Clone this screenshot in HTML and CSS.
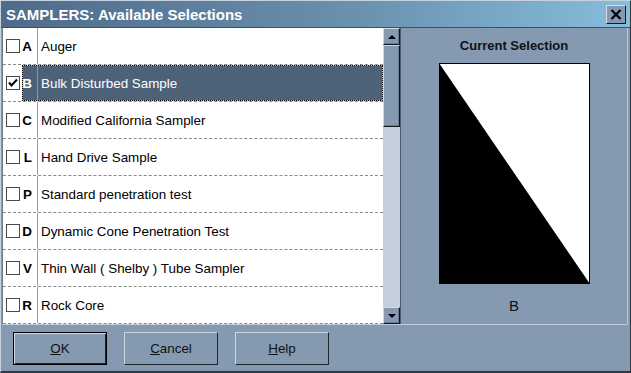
FILE: index.html
```html
<!DOCTYPE html>
<html>
<head>
<meta charset="utf-8">
<link rel="stylesheet" href="styles.css">
</head>
<body>
<div class="win">
  <div class="titlebar">
    <span class="title">SAMPLERS: Available Selections</span>
    <div class="close"><svg width="12" height="11" viewBox="0 0 12 11"><path d="M1.5 1 L10.5 10 M10.5 1 L1.5 10" stroke="#000" stroke-width="2.2" fill="none"/></svg></div>
  </div>
  <div class="main">
    <div class="list">
      <div class="row"><div class="cbcell"><span class="cb"></span></div><div class="item"><span class="key">A</span><span class="label">Auger</span></div></div>
      <div class="row"><div class="cbcell"><span class="cb"><svg width="12" height="12" viewBox="0 0 12 12"><path d="M2 5.5 L4.5 8.5 L10 2.5" stroke="#000" stroke-width="2" fill="none"/></svg></span></div><div class="item sel"><span class="key">B</span><span class="label">Bulk Disturbed Sample</span></div></div>
      <div class="row"><div class="cbcell"><span class="cb"></span></div><div class="item"><span class="key">C</span><span class="label">Modified California Sampler</span></div></div>
      <div class="row"><div class="cbcell"><span class="cb"></span></div><div class="item"><span class="key">L</span><span class="label">Hand Drive Sample</span></div></div>
      <div class="row"><div class="cbcell"><span class="cb"></span></div><div class="item"><span class="key">P</span><span class="label">Standard penetration test</span></div></div>
      <div class="row"><div class="cbcell"><span class="cb"></span></div><div class="item"><span class="key">D</span><span class="label">Dynamic Cone Penetration Test</span></div></div>
      <div class="row"><div class="cbcell"><span class="cb"></span></div><div class="item"><span class="key">V</span><span class="label">Thin Wall ( Shelby ) Tube Sampler</span></div></div>
      <div class="row"><div class="cbcell"><span class="cb"></span></div><div class="item"><span class="key">R</span><span class="label">Rock Core</span></div></div>
    </div>
    <div class="scroll">
      <div class="sbtn"><span class="arr-up"></span></div>
      <div class="thumb"></div>
      <div class="track"></div>
      <div class="sbtn"><span class="arr-down"></span></div>
    </div>
    <div class="panel">
      <div class="ptitle">Current Selection</div>
      <svg class="pic" width="151" height="221" viewBox="0 0 151 221">
        <rect x="0.5" y="0.5" width="150" height="220" fill="#fff" stroke="#000"/>
        <polygon points="0,0 151,221 0,221" fill="#000"/>
      </svg>
      <div class="pcode">B</div>
    </div>
  </div>
  <div class="footer">
    <div class="btn default"><span class="u">O</span>K</div>
    <div class="btn"><span class="u">C</span>ancel</div>
    <div class="btn"><span class="u">H</span>elp</div>
  </div>
</div>
</body>
</html>
```
FILE: styles.css
```css
html, body {
  margin: 0;
  padding: 0;
  background: #8599b1;
}
.win {
  width: 631px;
  height: 373px;
  box-sizing: border-box;
  border-style: solid;
  border-width: 1px 1px 2px 1px;
  border-color: #c6d2de #2e3944 #2e3944 #c6d2de;
  background: #8599b1;
  font-family: "Liberation Sans", Arial, sans-serif;
  display: flex;
  flex-direction: column;
  overflow: hidden;
}
.titlebar {
  height: 26px;
  border-bottom: 1px solid #3e4f62;
  background: linear-gradient(to right, #4f6a8b 0%, #6990ad 55%, #86bddb 100%);
  display: flex;
  align-items: center;
  justify-content: space-between;
  padding: 0 4px 0 5px;
  flex: none;
}
.title {
  color: #fff;
  font-weight: bold;
  font-size: 15px;
  letter-spacing: 0;
}
.close {
  width: 20px;
  height: 19px;
  box-sizing: border-box;
  background: #8599b1;
  border: 1px solid;
  border-color: #d4dce6 #141a20 #141a20 #d4dce6;
  display: flex;
  align-items: center;
  justify-content: center;
  margin-top: 1px;
}
.main {
  display: flex;
  margin: 0 2px 0 1px;
  border-bottom: 1px solid #c3cdd9;
  flex: none;
}
.list {
  width: 380px;
  height: 296px;
  background: #fff;
  border-left: 1px solid #6d7d8f;
}
.row {
  height: 36px;
  border-bottom: 1px dashed #8a8a8a;
  display: flex;
}
.cbcell {
  width: 19px;
  display: flex;
  align-items: center;
  padding-left: 3px;
  box-sizing: border-box;
}
.cb {
  width: 14px;
  height: 14px;
  box-sizing: border-box;
  border: 1px solid #4a4a4a;
  background: #fff;
  display: flex;
  align-items: center;
  justify-content: center;
}
.item {
  flex: 1;
  display: flex;
  align-items: stretch;
  color: #000;
  font-size: 13.4px;
}
.key {
  width: 15px;
  box-sizing: border-box;
  padding-right: 5px;
  text-align: right;
  font-weight: bold;
  display: flex;
  align-items: center;
  justify-content: flex-end;
}
.label {
  flex: 1;
  border-left: 1px solid #9c9c9c;
  padding-left: 3px;
  display: flex;
  align-items: center;
}
.sel {
  background: #4d6279;
  color: #fff;
  outline: 1px dotted #000;
  outline-offset: -1px;
  box-shadow: inset 0 0 0 1px #b8c0c8;
}
.sel .label {
  border-left-color: #8c98a6;
}
.scroll {
  width: 17px;
  height: 296px;
  background: #c4cfdb;
  display: flex;
  flex-direction: column;
}
.sbtn, .thumb {
  box-sizing: border-box;
  background: #8599b1;
  border: 1px solid;
  border-color: #d0d8e2 #10161c #10161c #d0d8e2;
  box-shadow: inset -1px -1px 0 #6a7b8f;
}
.sbtn {
  height: 17px;
  display: flex;
  align-items: center;
  justify-content: center;
}
.thumb {
  height: 82px;
}
.track {
  flex: 1;
}
.arr-up {
  width: 0;
  height: 0;
  border-left: 4px solid transparent;
  border-right: 4px solid transparent;
  border-bottom: 4px solid #000;
}
.arr-down {
  width: 0;
  height: 0;
  border-left: 4px solid transparent;
  border-right: 4px solid transparent;
  border-top: 4px solid #000;
}
.panel {
  width: 228px;
  box-sizing: border-box;
  border-left: 1px solid #4e5d6e;
  border-right: 1px solid #c3cdd9;
  display: flex;
  flex-direction: column;
  align-items: center;
  padding-top: 10px;
}
.ptitle {
  font-weight: bold;
  font-size: 13px;
  line-height: 15px;
  color: #111;
}
.pic {
  display: block;
  margin-top: 10px;
}
.pcode {
  margin-top: 13px;
  font-size: 15px;
  line-height: 17px;
  color: #111;
}
.footer {
  flex: 1;
  display: flex;
  gap: 17px;
  padding: 7px 0 0 12px;
}
.btn {
  width: 94px;
  height: 33px;
  box-sizing: border-box;
  border: 1px solid;
  border-color: #ccd5e0 #1c242c #1c242c #ccd5e0;
  background: #8599b1;
  display: flex;
  align-items: center;
  justify-content: center;
  font-size: 13.4px;
  color: #111;
}
.btn.default {
  border: 1px solid #000;
  box-shadow: inset 1px 1px 0 #ccd5e0, inset -1px -1px 0 #1c242c;
}
.u {
  text-decoration: underline;
}
```
